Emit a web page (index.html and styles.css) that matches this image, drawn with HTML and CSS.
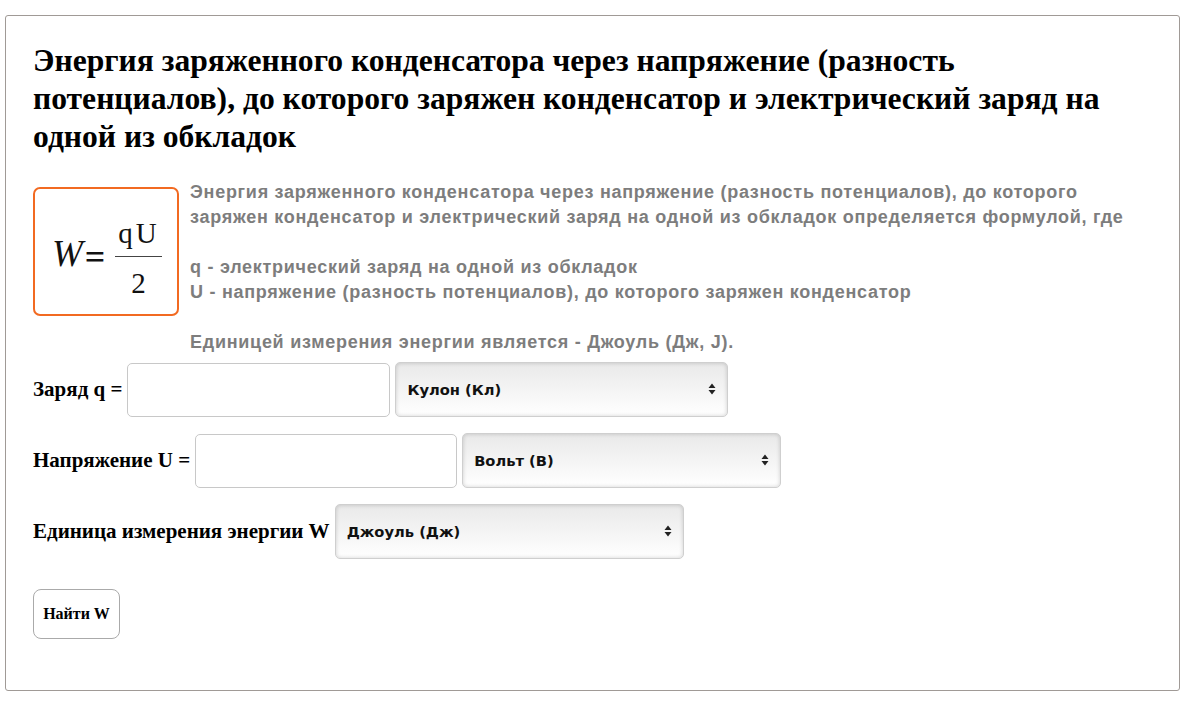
FILE: index.html
```html
<!DOCTYPE html>
<html lang="ru">
<head>
<meta charset="utf-8">
<title>Энергия конденсатора</title>
<link rel="stylesheet" href="styles.css">
</head>
<body>
<div class="card">
  <h1 class="title">Энергия заряженного конденсатора через напряжение (разность потенциалов), до которого заряжен конденсатор и электрический заряд на одной из обкладок</h1>
  <div class="info">
    <div class="formula">
      <span class="var">W</span><span class="eq">=</span>
      <span class="frac"><span class="num">qU</span><span class="den">2</span></span>
    </div>
    <div class="desc">
      <p>Энергия заряженного конденсатора через напряжение (разность потенциалов), до которого заряжен конденсатор и электрический заряд на одной из обкладок определяется формулой, где</p>
      <p>q - электрический заряд на одной из обкладок<br>U - напряжение (разность потенциалов), до которого заряжен конденсатор</p>
      <p>Единицей измерения энергии является - Джоуль (Дж, J).</p>
    </div>
  </div>
  <form class="form">
    <div class="row">
      <label class="label">Заряд q =</label>
      <input class="field f1" type="text">
      <div class="sel s1">
        <select><option>Кулон (Кл)</option></select>
        <svg class="arrows" width="8" height="12" viewBox="0 0 8 12"><path d="M4 0.5 L7.5 5 H0.5 Z M4 11.5 L7.5 7 H0.5 Z" fill="#222"/></svg>
      </div>
    </div>
    <div class="row">
      <label class="label">Напряжение U =</label>
      <input class="field f2" type="text">
      <div class="sel s2">
        <select><option>Вольт (В)</option></select>
        <svg class="arrows" width="8" height="12" viewBox="0 0 8 12"><path d="M4 0.5 L7.5 5 H0.5 Z M4 11.5 L7.5 7 H0.5 Z" fill="#222"/></svg>
      </div>
    </div>
    <div class="row">
      <label class="label">Единица измерения энергии W</label>
      <div class="sel s3">
        <select><option>Джоуль (Дж)</option></select>
        <svg class="arrows" width="8" height="12" viewBox="0 0 8 12"><path d="M4 0.5 L7.5 5 H0.5 Z M4 11.5 L7.5 7 H0.5 Z" fill="#222"/></svg>
      </div>
    </div>
    <button class="btn" type="button">Найти W</button>
  </form>
</div>
</body>
</html>
```
FILE: styles.css
```css
html, body { margin: 0; padding: 0; background: #fff; }
body { padding: 15px 20px 16px 5px; }
.card {
  border: 1px solid #a09a96;
  border-radius: 3px;
  padding: 26px 20px 52px 27px;
  height: 596px;
}
.title {
  font-family: "Liberation Serif", "Times New Roman", serif;
  font-weight: bold;
  font-size: 31.6px;
  line-height: 38px;
  margin: 0 30px 26px 0;
  color: #000;
}
.info { display: flex; align-items: flex-start; }
.formula {
  flex: none;
  box-sizing: border-box;
  width: 146px;
  height: 129px;
  margin-top: 5px;
  padding: 13px 0 0 17px;
  border: 2px solid #f26a21;
  border-radius: 7px;
  display: flex;
  align-items: center;
  font-family: "Liberation Serif", "Times New Roman", serif;
  color: #111;
}
.var { font-style: italic; font-size: 37px; line-height: 37px; margin-bottom: 10px; }
.eq { font-size: 36px; line-height: 36px; margin: 0 10px 2px 2px; font-weight: bold; }
.frac { display: inline-flex; flex-direction: column; align-items: center; font-size: 29px; line-height: 30px; }
.num { border-bottom: 1.5px solid #444; padding: 0 2px 8px 3px; letter-spacing: 3px; }
.den { padding-top: 11px; }
.desc {
  margin: -2px 0 0 11px;
  max-width: 955px;
  font-family: "Liberation Sans", Arial, sans-serif;
  font-weight: bold;
  font-size: 18px;
  letter-spacing: 0.73px;
  line-height: 25px;
  color: #7d7d7d;
}
.desc p { margin: 0 0 25px 0; }
.desc p:last-child { margin-bottom: 0; }
.form { margin-top: 7px; display: flex; flex-direction: column; align-items: flex-start; }
.row { display: flex; align-items: center; gap: 5px; margin-bottom: 16px; }
.label {
  font-family: "Liberation Serif", "Times New Roman", serif;
  font-weight: bold;
  font-size: 21px;
  color: #000;
}
.field {
  height: 54px;
  box-sizing: border-box;
  border: 1px solid #c8c8c8;
  border-radius: 5px;
  background: #fff;
  margin: 0;
}
.f1 { width: 263px; }
.f2 { width: 262px; }
.sel { position: relative; }
.sel select {
  -webkit-appearance: none;
  appearance: none;
  height: 55px;
  box-sizing: border-box;
  border: 1px solid #cfcfcf;
  border-radius: 5px;
  background: linear-gradient(#e9e9e9, #ffffff);
  box-shadow: inset 0 0 4px rgba(0,0,0,0.18);
  font-family: "DejaVu Sans", Verdana, sans-serif;
  font-weight: bold;
  font-size: 14.7px;
  color: #111;
  padding: 0 0 0 11px;
  margin: 0;
}
.s1 select { width: 333px; }
.s2 select { width: 319px; }
.s3 select { width: 349px; }
.arrows { position: absolute; right: 12px; top: 21px; pointer-events: none; }
.btn {
  margin-top: 14px;
  width: 87px;
  height: 50px;
  background: #fff;
  border: 1px solid #aaa;
  border-radius: 8px;
  font-family: "Liberation Serif", "Times New Roman", serif;
  font-weight: bold;
  font-size: 16px;
  color: #000;
  padding: 0;
}
```
